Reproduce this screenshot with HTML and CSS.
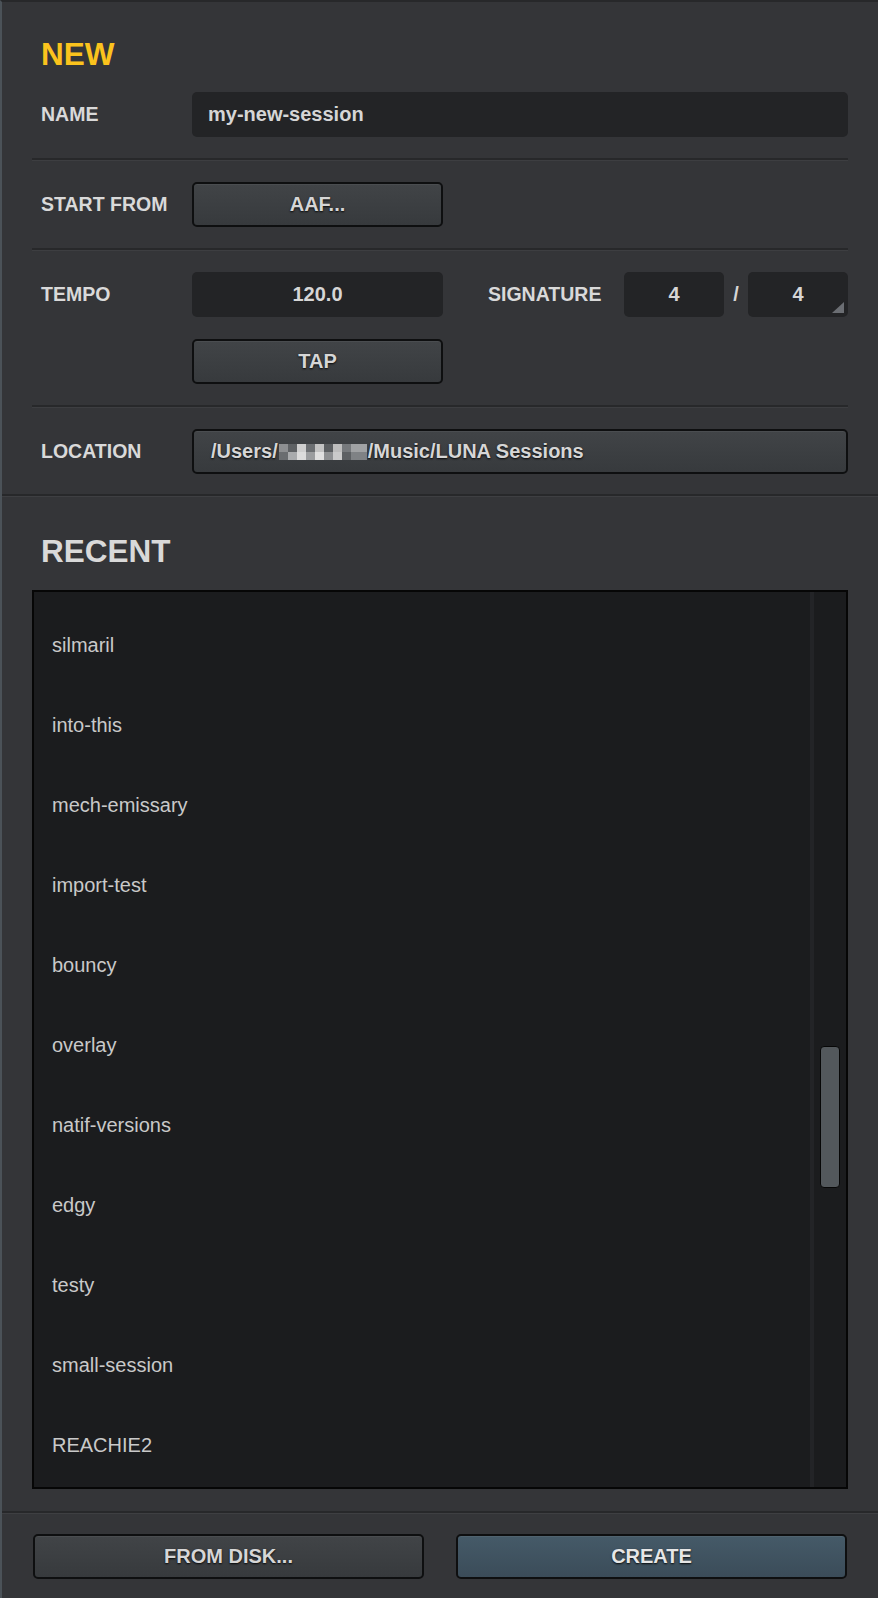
FILE: index.html
```html
<!DOCTYPE html>
<html lang="en">
<head>
  <meta charset="UTF-8">
  <meta name="viewport" content="width=device-width, initial-scale=1.0">
  <title>New Session</title>
  <link rel="stylesheet" href="styles.css">
</head>
<body>

  <div class="panel">
    <section class="new-section">
      <h1 class="title title-new">NEW</h1>

      <div class="row row-first">
        <div class="label">NAME</div>
        <div class="field field-text">my-new-session</div>
      </div>

      <div class="row">
        <div class="label">START FROM</div>
        <button class="btn btn-half">AAF...</button>
      </div>

      <div class="row">
        <div class="label">TEMPO</div>
        <div class="tempo-col">
          <div class="field field-center">120.0</div>
          <button class="btn">TAP</button>
        </div>
        <div class="sig">
          <div class="label sig-label">SIGNATURE</div>
          <div class="field field-center sig-box sig-first">4</div>
          <div class="sig-slash">/</div>
          <div class="field field-center sig-box sig-menu">4</div>
        </div>
      </div>

      <div class="row row-last">
        <div class="label">LOCATION</div>
        <button class="btn btn-wide btn-left">/Users/<span class="mosaic"></span>/Music/LUNA Sessions</button>
      </div>
    </section>

    <section class="recent-section">
      <h2 class="title">RECENT</h2>
      <div class="recent-list">
        <ul class="items">
          <li>silmaril</li>
          <li>into-this</li>
          <li>mech-emissary</li>
          <li>import-test</li>
          <li>bouncy</li>
          <li>overlay</li>
          <li>natif-versions</li>
          <li>edgy</li>
          <li>testy</li>
          <li>small-session</li>
          <li>REACHIE2</li>
        </ul>
        <div class="scroll-track">
          <div class="scroll-thumb"></div>
        </div>
      </div>
    </section>

    <footer class="actions">
      <button class="btn">FROM DISK...</button>
      <button class="btn btn-primary">CREATE</button>
    </footer>
  </div>

</body>
</html>
```

FILE: styles.css
```css
/* dark session dialog */
body {
  margin: 0;
  background-color: #2a2b2d;
  font-family: "Liberation Sans", Arial, sans-serif;
  color: #d8d8d8;
}
.panel {
  box-sizing: border-box;
  width: 878px;
  min-height: 1598px;
  background-color: #343538;
  border-left: 2px solid #4b5258;
  border-top: 2px solid #27282a;
}

.title {
  margin: 0;
  font-size: 31.5px;
  line-height: 36px;
  font-weight: bold;
  color: #d9d9d9;
  padding-left: 9px;
}
.title-new {
  color: #fbc31d;
}

.new-section {
  padding: 34px 30px 0 30px;
}
.row {
  display: flex;
  align-items: flex-start;
  padding: 22px 0 21px;
  border-top: 2px solid #27282a;
  box-shadow: inset 0 1px 0 #3d3e41;
}
.row-first {
  margin-top: 20px;
  padding-top: 0;
  border-top: none;
  box-shadow: none;
}
.row-last {
  padding-bottom: 20px;
}
.label {
  width: 151px;
  flex-shrink: 0;
  padding-left: 9px;
  height: 45px;
  line-height: 45px;
  font-size: 19.5px;
  font-weight: bold;
  color: #d9d9d9;
  white-space: nowrap;
}

.field {
  box-sizing: border-box;
  height: 45px;
  line-height: 45px;
  background-color: #232426;
  border-radius: 5px;
  font-size: 20px;
  font-weight: bold;
  color: #d6d6d6;
}
.field-text {
  flex: 1;
  padding-left: 16px;
}
.field-center {
  text-align: center;
}

.btn {
  box-sizing: border-box;
  display: block;
  width: 100%;
  height: 45px;
  margin: 0;
  padding: 0;
  font-family: inherit;
  font-size: 20px;
  font-weight: bold;
  color: #d6d6d6;
  text-shadow: 0 1px 2px rgba(0, 0, 0, 0.9);
  background: linear-gradient(#414447, #373a3d);
  border: 2px solid #0e0f10;
  border-radius: 5px;
  box-shadow: inset 0 1px 0 #4a4d50;
  cursor: pointer;
}
.btn-half {
  width: 251px;
}
.btn-wide {
  flex: 1;
}
.btn-left {
  text-align: left;
  padding-left: 17px;
}
.btn-primary {
  background: linear-gradient(#455a68, #3b4c59);
  box-shadow: inset 0 1px 0 #50636f;
  color: #e6e6e6;
}

.tempo-col {
  width: 251px;
  flex-shrink: 0;
  display: flex;
  flex-direction: column;
  gap: 22px;
}
.sig {
  flex: 1;
  display: flex;
  align-items: center;
  margin-left: 45px;
}
.sig-label {
  width: auto;
  padding-left: 0;
}
.sig-box {
  width: 100px;
  flex-shrink: 0;
}
.sig-first {
  margin-left: auto;
}
.sig-slash {
  width: 24px;
  text-align: center;
  font-size: 20px;
  font-weight: bold;
  color: #d6d6d6;
}
.sig-menu {
  position: relative;
}
.sig-menu::after {
  content: "";
  position: absolute;
  right: 4px;
  bottom: 4px;
  width: 12px;
  height: 11px;
  background-color: #6b6e73;
  clip-path: polygon(100% 0, 100% 100%, 0 100%);
}

/* blurred user name */
.mosaic {
  display: inline-block;
  width: 88px;
  height: 16px;
  margin: 0 1px 0 1px;
  vertical-align: -2px;
  background:
    linear-gradient(90deg, #8d8f91 0 9px, #5e6164 9px 18px, #cfcfcf 18px 27px, #6c6f72 27px 36px, #c3c3c3 36px 45px, #5b5e61 45px 54px, #bdbdbd 54px 63px, #76797c 63px 72px, #a0a2a4 72px 88px) top / 100% 50% no-repeat,
    linear-gradient(90deg, #6a6d70 0 9px, #a9abad 9px 18px, #dcdcdc 18px 27px, #9b9d9f 27px 36px, #e0e0e0 36px 45px, #8e9092 45px 54px, #cacaca 54px 63px, #5d6063 63px 72px, #7f8285 72px 88px) bottom / 100% 50% no-repeat;
}

.recent-section {
  padding: 37px 30px 22px 30px;
  border-top: 2px solid #27282a;
  box-shadow: inset 0 1px 0 #3e3f42;
}
.recent-list {
  box-sizing: border-box;
  display: flex;
  height: 899px;
  margin-top: 21px;
  background-color: #1b1c1e;
  border: 2px solid #060606;
}
.items {
  flex: 1;
  margin: 0;
  padding: 13px 0 0 18px;
  list-style: none;
}
.items li {
  height: 80px;
  line-height: 80px;
  font-size: 20px;
  color: #c9c9c9;
}
.scroll-track {
  width: 32px;
  border-left: 4px solid #232427;
}
.scroll-thumb {
  box-sizing: border-box;
  width: 20px;
  height: 142px;
  margin: 454px 0 0 6px;
  background-color: #53585c;
  border: 1.5px solid #070707;
  border-radius: 4px;
}

.actions {
  display: grid;
  grid-template-columns: 1fr 1fr;
  gap: 32px;
  padding: 21px 31px 19px 31px;
  border-top: 2px solid #27282a;
  box-shadow: inset 0 1px 0 #3e3f42;
}
```
